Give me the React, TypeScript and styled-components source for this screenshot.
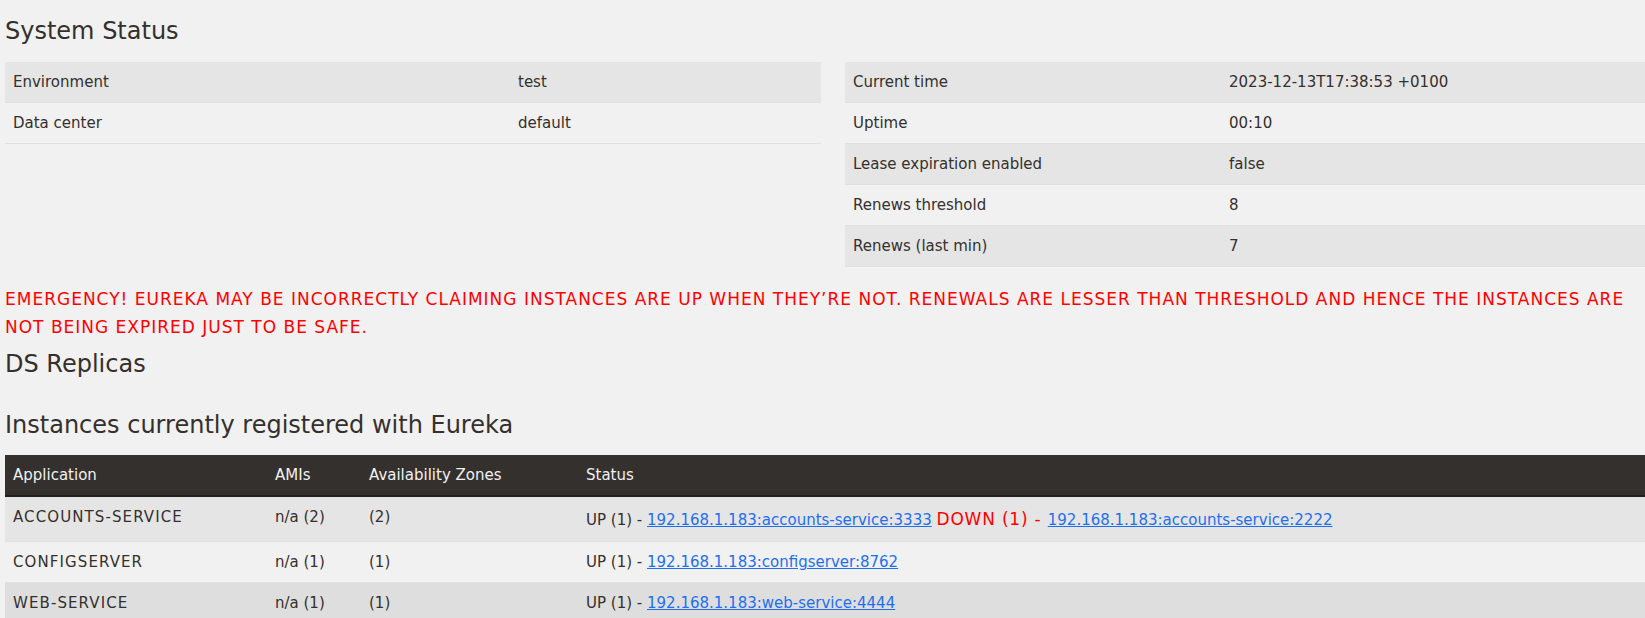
import React from "react";
import styled, { createGlobalStyle } from "styled-components";

const GlobalStyle = createGlobalStyle`
  html, body {
    margin: 0;
    padding: 0;
    background: #f1f1f1;
    overflow: hidden;
  }
  body {
    font-family: "DejaVu Sans", "Liberation Sans", sans-serif;
    font-size: 15px;
    color: #34302d;
  }
`;

const Page = styled.div`
  display: flex;
  flex-direction: column;
  width: 1656px;
  padding-left: 5px;
`;

const Heading = styled.h2<{ $mt: number; $mb: number }>`
  font-size: 24px;
  line-height: 28px;
  font-weight: normal;
  margin: ${(p) => p.$mt}px 0 ${(p) => p.$mb}px;
  color: #34302d;
`;

const StatusGrid = styled.div`
  display: grid;
  grid-template-columns: 816px 816px;
  gap: 24px;
  align-items: start;
`;

const Table = styled.table`
  width: 100%;
  border-collapse: collapse;
  border-spacing: 0;
`;

const Col = styled.col<{ $w?: number }>`
  width: ${(p) => (p.$w ? `${p.$w}px` : "auto")};
`;

type Tone = "stripe" | "plain" | "hover";

const Row = styled.tr<{ $tone: Tone }>`
  background: ${(p) =>
    p.$tone === "stripe" ? "#e5e5e5" : p.$tone === "hover" ? "#dedede" : "transparent"};
`;

const Cell = styled.td<{ $caps?: boolean }>`
  padding: 10px 8px;
  line-height: 20px;
  text-align: left;
  vertical-align: top;
  border-bottom: 1px solid #dfe1e5;
  white-space: nowrap;
  letter-spacing: ${(p) => (p.$caps ? "1.1px" : "normal")};
`;

const HeadCell = styled.th`
  padding: 10px 8px;
  line-height: 20px;
  text-align: left;
  font-weight: normal;
  background: #34302d;
  color: #f1f1f1;
  border-bottom: 2px solid #221f1d;
`;

const Emergency = styled.p`
  margin: 18px 0 0;
  font-size: 17px;
  letter-spacing: 1px;
  line-height: 28px;
  color: #ff0000;
`;

const Link = styled.a`
  color: #1f6fef;
  text-decoration: underline;
`;

const Down = styled.span`
  color: #ff0000;
  font-size: 17px;
  letter-spacing: 0.8px;
  line-height: 24px;
`;

const leftRows = [
  ["Environment", "test"],
  ["Data center", "default"],
];

const rightRows = [
  ["Current time", "2023-12-13T17:38:53 +0100"],
  ["Uptime", "00:10"],
  ["Lease expiration enabled", "false"],
  ["Renews threshold", "8"],
  ["Renews (last min)", "7"],
];

type Instance = {
  app: string;
  amis: string;
  zones: string;
  up: string;
  down?: string;
};

const instances: Instance[] = [
  {
    app: "ACCOUNTS-SERVICE",
    amis: "n/a (2)",
    zones: "(2)",
    up: "192.168.1.183:accounts-service:3333",
    down: "192.168.1.183:accounts-service:2222",
  },
  { app: "CONFIGSERVER", amis: "n/a (1)", zones: "(1)", up: "192.168.1.183:configserver:8762" },
  { app: "WEB-SERVICE", amis: "n/a (1)", zones: "(1)", up: "192.168.1.183:web-service:4444" },
];

function InfoTable({ rows, keyWidth }: { rows: string[][]; keyWidth: number }) {
  return (
    <Table>
      <colgroup>
        <Col $w={keyWidth} />
        <Col />
      </colgroup>
      <tbody>
        {rows.map(([k, v], i) => (
          <Row key={k} $tone={i % 2 === 0 ? "stripe" : "plain"}>
            <Cell>{k}</Cell>
            <Cell>{v}</Cell>
          </Row>
        ))}
      </tbody>
    </Table>
  );
}

export default function App() {
  return (
    <>
      <GlobalStyle />
      <Page>
        <Heading $mt={17} $mb={17}>
          System Status
        </Heading>
        <StatusGrid>
          <InfoTable rows={leftRows} keyWidth={505} />
          <InfoTable rows={rightRows} keyWidth={376} />
        </StatusGrid>

        <Emergency>
          EMERGENCY! EUREKA MAY BE INCORRECTLY CLAIMING INSTANCES ARE UP WHEN THEY’RE NOT. RENEWALS
          ARE LESSER THAN THRESHOLD AND HENCE THE INSTANCES ARE NOT BEING EXPIRED JUST TO BE SAFE.
        </Emergency>

        <Heading $mt={9} $mb={0}>
          DS Replicas
        </Heading>

        <Heading $mt={33} $mb={16}>
          Instances currently registered with Eureka
        </Heading>

        <Table>
          <colgroup>
            <Col $w={262} />
            <Col $w={94} />
            <Col $w={217} />
            <Col />
          </colgroup>
          <thead>
            <tr>
              <HeadCell>Application</HeadCell>
              <HeadCell>AMIs</HeadCell>
              <HeadCell>Availability Zones</HeadCell>
              <HeadCell>Status</HeadCell>
            </tr>
          </thead>
          <tbody>
            {instances.map((it, i) => (
              <Row key={it.app} $tone={i === 2 ? "hover" : i % 2 === 0 ? "stripe" : "plain"}>
                <Cell $caps>{it.app}</Cell>
                <Cell>{it.amis}</Cell>
                <Cell>{it.zones}</Cell>
                <Cell>
                  UP (1) - <Link href="#">{it.up}</Link>
                  {it.down && (
                    <>
                      {" "}
                      <Down>DOWN (1) - </Down>
                      <Link href="#">{it.down}</Link>
                    </>
                  )}
                </Cell>
              </Row>
            ))}
          </tbody>
        </Table>
      </Page>
    </>
  );
}
